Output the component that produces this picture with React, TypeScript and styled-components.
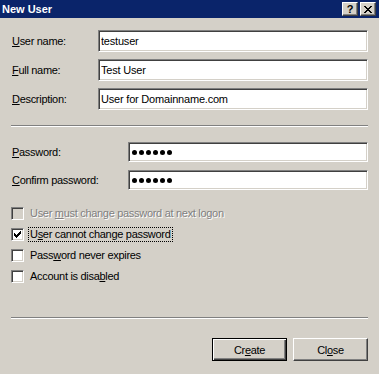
import React from 'react'
import styled, { createGlobalStyle } from 'styled-components'

const GlobalStyle = createGlobalStyle`
  html, body {
    margin: 0;
    padding: 0;
    background: #d4d0c8;
  }
  body {
    font-family: "Liberation Sans", Arial, sans-serif;
  }
`

const face = '#d4d0c8'

const Window = styled.div`
  width: 379px;
  height: 374px;
  background: ${face};
  display: flex;
  flex-direction: column;
  font-family: "Liberation Sans", Arial, sans-serif;
  font-size: 11px;
  letter-spacing: -0.3px;
  color: #000;
  overflow: hidden;
`

const TitleBar = styled.div`
  height: 18px;
  background: #0a246a;
  display: flex;
  align-items: center;
  justify-content: space-between;
  padding: 0 3px 0 2px;
`

const Title = styled.span`
  color: #fff;
  font-weight: bold;
  font-size: 11px;
  letter-spacing: 0;
`

const Controls = styled.div`
  display: flex;
  gap: 2px;
`

const CaptionButton = styled.div`
  width: 16px;
  height: 14px;
  box-sizing: border-box;
  background: ${face};
  border: 1px solid;
  border-color: #fff #404040 #404040 #fff;
  box-shadow: inset -1px -1px #808080;
  display: flex;
  align-items: center;
  justify-content: center;
  font-weight: bold;
  font-size: 11px;
  line-height: 1;
  letter-spacing: 0;
`

const Body = styled.div`
  flex: 1;
  display: flex;
  flex-direction: column;
  padding: 12px 11px 0 11px;
`

const Fields = styled.div<{ $gap: number; $top?: number }>`
  display: flex;
  flex-direction: column;
  gap: ${p => p.$gap}px;
  margin-top: ${p => p.$top ?? 0}px;
`

const Row = styled.div<{ $labelWidth: number }>`
  display: grid;
  grid-template-columns: ${p => p.$labelWidth}px 1fr;
  align-items: center;
  padding-left: 1px;
`

const Label = styled.label`
  white-space: nowrap;
`

const Key = styled.span`
  text-decoration: underline;
  text-underline-offset: 1px;
`

const TextBox = styled.input<{ $height: number }>`
  box-sizing: border-box;
  width: 100%;
  height: ${p => p.$height}px;
  margin: 0;
  padding: 0 2px;
  border: 1px solid;
  border-color: #808080 #fff #fff #808080;
  box-shadow: inset 1px 1px #404040, inset -1px -1px ${face};
  background: #fff;
  font-family: inherit;
  font-size: 11px;
  letter-spacing: -0.2px;
  color: #000;
  outline: none;
`

const PasswordBox = styled.div`
  box-sizing: border-box;
  height: 20px;
  padding: 0 3px;
  display: flex;
  align-items: center;
  gap: 2px;
  border: 1px solid;
  border-color: #808080 #fff #fff #808080;
  box-shadow: inset 1px 1px #404040, inset -1px -1px ${face};
  background: #fff;
`

const Dot = styled.span`
  width: 5px;
  height: 5px;
  border-radius: 50%;
  background: #000;
`

const Separator = styled.div<{ $top: number }>`
  margin-top: ${p => p.$top}px;
  border-top: 1px solid #808080;
  border-bottom: 1px solid #fff;
`

const Checks = styled.div`
  margin-top: 13px;
  display: flex;
  flex-direction: column;
`

const CheckRow = styled.div<{ $disabled?: boolean }>`
  height: 21px;
  display: flex;
  align-items: center;
  gap: 5px;
  color: ${p => (p.$disabled ? '#808080' : '#000')};
  text-shadow: ${p => (p.$disabled ? '1px 1px 0 #fff' : 'none')};
`

const Box = styled.span<{ $disabled?: boolean }>`
  width: 13px;
  height: 13px;
  box-sizing: border-box;
  border: 1px solid;
  border-color: #808080 #fff #fff #808080;
  box-shadow: inset 1px 1px #404040, inset -1px -1px ${face};
  background: ${p => (p.$disabled ? face : '#fff')};
  display: flex;
  align-items: center;
  justify-content: center;
  flex-shrink: 0;
`

const CheckText = styled.span<{ $focused?: boolean }>`
  padding: 0 1px;
  outline: ${p => (p.$focused ? '1px dotted #000' : 'none')};
  line-height: 13px;
`

const ButtonBar = styled.div`
  margin-top: 19px;
  display: flex;
  justify-content: flex-end;
  gap: 6px;
`

const Button = styled.div<{ $default?: boolean }>`
  width: 75px;
  height: 23px;
  box-sizing: border-box;
  background: ${face};
  display: flex;
  align-items: center;
  justify-content: center;
  border: 1px solid;
  border-color: ${p => (p.$default ? '#000' : '#fff #404040 #404040 #fff')};
  box-shadow: ${p =>
    p.$default
      ? 'inset 1px 1px #fff, inset -1px -1px #404040, inset -2px -2px #808080'
      : 'inset -1px -1px #808080'};
`

const CheckMark = () => (
  <svg width="7" height="7" viewBox="0 0 7 7" shapeRendering="crispEdges">
    {[2, 3, 4, 3, 2, 1, 0].map((y, x) => (
      <rect key={x} x={x} y={y} width="1" height="3" fill="#000" />
    ))}
  </svg>
)

const CloseGlyph = () => (
  <svg width="8" height="7" viewBox="0 0 8 7" shapeRendering="crispEdges">
    <path d="M0 0h2v1H0zM6 0h2v1H6zM1 1h2v1H1zM5 1h2v1H5zM2 2h4v1H2zM3 3h2v1H3zM2 4h4v1H2zM1 5h2v1H1zM5 5h2v1H5zM0 6h2v1H0zM6 6h2v1H6z" fill="#000" />
  </svg>
)

const checks = [
  { pre: 'User ', key: 'm', post: 'ust change password at next logon', disabled: true },
  { pre: 'U', key: 's', post: 'er cannot change password', checked: true, focused: true },
  { pre: 'Pass', key: 'w', post: 'ord never expires' },
  { pre: 'Account is disa', key: 'b', post: 'led' },
]

export default function App() {
  return (
    <Window>
      <GlobalStyle />
      <TitleBar>
        <Title>New User</Title>
        <Controls>
          <CaptionButton>?</CaptionButton>
          <CaptionButton>
            <CloseGlyph />
          </CaptionButton>
        </Controls>
      </TitleBar>
      <Body>
        <Fields $gap={7}>
          <Row $labelWidth={86}>
            <Label><Key>U</Key>ser name:</Label>
            <TextBox $height={22} readOnly value="testuser" />
          </Row>
          <Row $labelWidth={86}>
            <Label><Key>F</Key>ull name:</Label>
            <TextBox $height={22} readOnly value="Test User" />
          </Row>
          <Row $labelWidth={86}>
            <Label><Key>D</Key>escription:</Label>
            <TextBox $height={22} readOnly value="User for Domainname.com" />
          </Row>
        </Fields>

        <Separator $top={15} />

        <Fields $gap={8} $top={15}>
          <Row $labelWidth={116}>
            <Label><Key>P</Key>assword:</Label>
            <PasswordBox>
              {Array.from({ length: 6 }).map((_, i) => <Dot key={i} />)}
            </PasswordBox>
          </Row>
          <Row $labelWidth={116}>
            <Label><Key>C</Key>onfirm password:</Label>
            <PasswordBox>
              {Array.from({ length: 6 }).map((_, i) => <Dot key={i} />)}
            </PasswordBox>
          </Row>
        </Fields>

        <Checks>
          {checks.map((c, i) => (
            <CheckRow key={i} $disabled={c.disabled}>
              <Box $disabled={c.disabled}>{c.checked && <CheckMark />}</Box>
              <CheckText $focused={c.focused}>
                {c.pre}<Key>{c.key}</Key>{c.post}
              </CheckText>
            </CheckRow>
          ))}
        </Checks>

        <Separator $top={30} />

        <ButtonBar>
          <Button $default>Cr<Key>e</Key>ate</Button>
          <Button>Cl<Key>o</Key>se</Button>
        </ButtonBar>
      </Body>
    </Window>
  )
}
